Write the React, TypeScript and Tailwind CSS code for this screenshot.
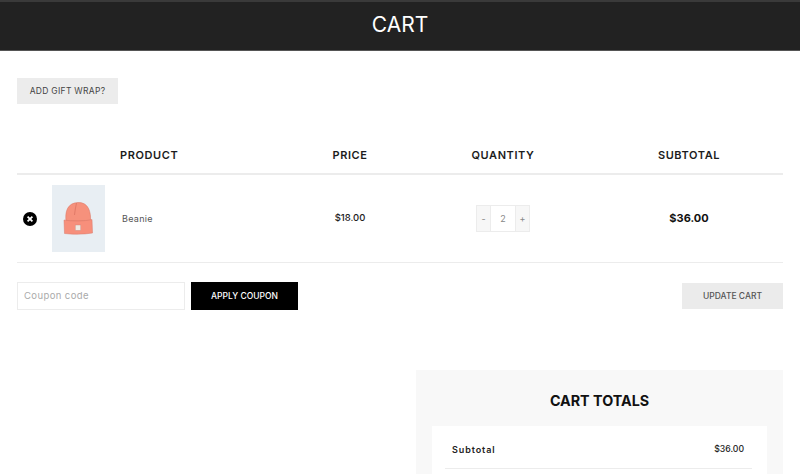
const font = "font-['Inter','Liberation_Sans',sans-serif]";

function Beanie() {
  return (
    <svg viewBox="0 0 53 67" className="block h-[67px] w-[53px]">
      <rect width="53" height="67" fill="#e8eef3" />
      <path d="M14 36 C13 27 15 18 26 17.5 C37 17 39 28 38.5 36 Z" fill="#f6917c" stroke="#d9705e" strokeWidth="0.5" />
      <path d="M24.5 18 C23.5 22 23 26 22.5 30" fill="none" stroke="#d9705e" strokeWidth="0.7" />
      <path d="M12 35 C20 36.5 32 36.5 40 34.5 L40.5 48 C32 49.5 20 49.5 12.5 48.5 Z" fill="#f78f7b" stroke="#d9786a" strokeWidth="0.5" />
      <rect x="23.2" y="40" width="5.6" height="5.4" fill="#efe9e2" stroke="#c9867a" strokeWidth="0.4" />
    </svg>
  );
}

function RemoveIcon() {
  return (
    <svg viewBox="0 0 14 14" className="h-[14px] w-[14px]">
      <circle cx="7" cy="7" r="7" fill="#000" />
      <path d="M4.6 4.6 L9.4 9.4 M9.4 4.6 L4.6 9.4" stroke="#fff" strokeWidth="1.8" />
    </svg>
  );
}

function Header() {
  return (
    <header className="flex h-[51px] items-center justify-center border-t-2 border-b border-t-[#3a3a3a] border-b-[#555] bg-[#222222] pb-[3px]">
      <h1 className="text-[21px] font-normal text-white">CART</h1>
    </header>
  );
}

function CartTable() {
  return (
    <div className="mt-[30px]">
      <div className="grid h-[41px] grid-cols-[35px_68px_169px_122px_184px_188px] items-center border-b-2 border-[#ececec] pt-[3px] text-[11px] font-semibold tracking-[0.6px] text-[#1c1c1c]">
        <div />
        <div />
        <div>PRODUCT</div>
        <div className="text-center">PRICE</div>
        <div className="text-center">QUANTITY</div>
        <div className="text-center">SUBTOTAL</div>
      </div>
      <div className="grid h-[88px] grid-cols-[35px_68px_169px_122px_184px_188px] items-center border-b border-[#ececec]">
        <div className="pl-[6px]">
          <RemoveIcon />
        </div>
        <Beanie />
        <div className="pl-[2px] text-[9px] tracking-[0.3px] text-[#555]">Beanie</div>
        <div className="text-center text-[9.5px] font-medium text-[#222]">$18.00</div>
        <div className="flex justify-center">
          <div className="flex h-[27px] w-[54px] border border-[#ececec] text-[9px] text-[#888]">
            <span className="flex w-[13px] items-center justify-center bg-[#f7f7f7]">-</span>
            <span className="flex flex-1 items-center justify-center border-x border-[#ececec]">2</span>
            <span className="flex w-[13px] items-center justify-center bg-[#f7f7f7]">+</span>
          </div>
        </div>
        <div className="text-center text-[11px] font-bold text-[#111]">$36.00</div>
      </div>
    </div>
  );
}

function CouponRow() {
  return (
    <div className="mt-[19px] flex items-center justify-between">
      <div className="flex gap-[6px]">
        <div className="flex h-[28px] w-[168px] items-center border border-[#ececec] pl-[6px] text-[9.5px] tracking-[0.4px] text-[#aaa]">
          Coupon code
        </div>
        <button className="h-[28px] w-[107px] bg-black text-[8.5px] font-medium text-white">
          APPLY COUPON
        </button>
      </div>
      <button className="h-[26px] w-[101px] bg-[#ebebeb] text-[8.5px] font-medium text-[#555]">
        UPDATE CART
      </button>
    </div>
  );
}

function CartTotals() {
  return (
    <section className="mt-[60px] ml-auto h-[200px] w-[367px] bg-[#f8f8f8] px-[16px] pt-[21px]">
      <h2 className="text-center text-[14.3px] leading-[20px] font-bold text-[#111]">CART TOTALS</h2>
      <div className="mt-[15px] h-[100px] bg-white pr-[15px] pl-[13px]">
        <div className="flex h-[43px] items-center justify-between border-b border-[#ececec] pt-[5px] pr-[8px] pl-[7px]">
          <span className="text-[9px] font-semibold tracking-[0.9px] text-[#222]">Subtotal</span>
          <span className="text-[8.7px] font-medium text-[#222]">$36.00</span>
        </div>
      </div>
    </section>
  );
}

export default function App() {
  return (
    <div className={`${font} h-[474px] overflow-hidden bg-white`}>
      <Header />
      <main className="px-[17px] pt-[27px]">
        <button className="block h-[26px] w-[101px] bg-[#ececec] text-[8.5px] font-normal tracking-[0.3px] text-[#444]">
          ADD GIFT WRAP?
        </button>
        <CartTable />
        <CouponRow />
        <CartTotals />
      </main>
    </div>
  );
}
